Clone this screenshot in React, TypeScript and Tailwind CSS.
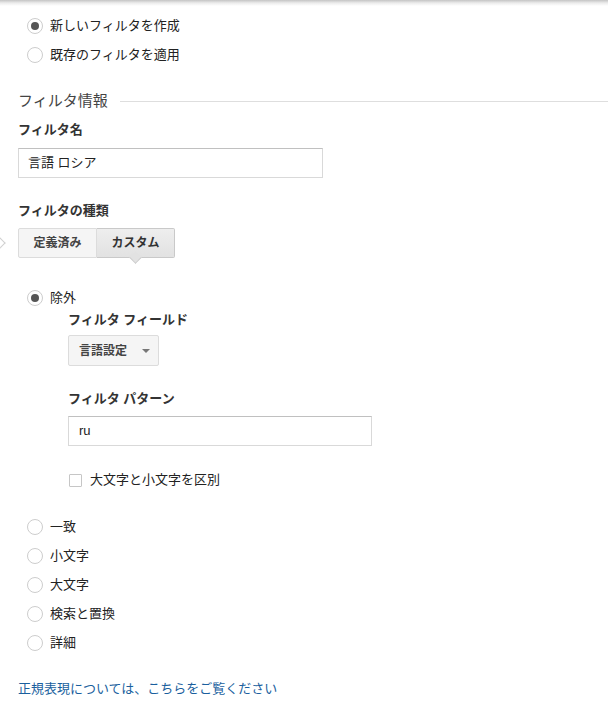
import React from 'react';

const font = "font-['Liberation_Sans','Noto_Sans_CJK_JP',sans-serif]";

function Radio({ label, checked = false, className = 'h-[29px]' }: { label: string; checked?: boolean; className?: string }) {
  return (
    <div className={`flex items-center pl-[27px] ${className}`}>
      <span className="flex h-[16px] w-[16px] items-center justify-center rounded-full border border-[#cdcdcd] bg-white">
        {checked && <span className="h-[8px] w-[8px] rounded-full bg-[#555]" />}
      </span>
      <span className="ml-[7px] text-[13px] leading-[18px] text-[#222]">{label}</span>
    </div>
  );
}

function Label({ children, className = '' }: { children: React.ReactNode; className?: string }) {
  return <div className={`text-[13px] font-bold leading-[18px] text-[#333] ${className}`}>{children}</div>;
}

export default function App() {
  return (
    <div className={`relative w-[608px] min-h-[717px] bg-white ${font}`}>
      {/* top shadow */}
      <div className="h-[6px] bg-gradient-to-b from-[#c4c4c4] via-[#ececec] to-white" />

      <div className="pt-[5px]">
        <Radio label="新しいフィルタを作成" checked />
        <Radio label="既存のフィルタを適用" />
      </div>

      <div className="mt-[22px] flex items-center pl-[18px]">
        <span className="text-[15px] leading-[20px] text-[#444]">フィルタ情報</span>
        <span className="ml-[12px] h-px flex-1 bg-[#dedede]" />
      </div>

      <div className="pl-[18px]">
        <Label className="mt-[10px]">フィルタ名</Label>
        <div className="mt-[9px] flex h-[30px] w-[305px] items-center border border-[#d9d9d9] border-t-[#c0c0c0] px-[9px] text-[13px] text-[#222]">
          言語 ロシア
        </div>

        <Label className="mt-[24px]">フィルタの種類</Label>
        <div className="relative mt-[8px] flex h-[30px]">
          <span className="absolute left-[-22px] top-[11px] h-[8px] w-[8px] rotate-45 border-r border-t border-[#d0d0d0]" />
          <div className="flex w-[79px] items-center justify-center rounded-l-[2px] border border-[#dcdcdc] bg-[#f5f5f5] text-[12px] font-bold text-[#444]">
            定義済み
          </div>
          <div className="relative flex w-[78px] items-center justify-center rounded-r-[2px] border border-l-0 border-[#c9c9c9] bg-gradient-to-b from-[#eeeeee] to-[#e2e2e2] text-[12px] font-bold text-[#333]">
            カスタム
            <span className="absolute bottom-[-5px] left-[34px] h-[9px] w-[9px] rotate-45 border-b border-r border-[#cfcfcf] bg-[#e2e2e2]" />
          </div>
        </div>
      </div>

      <Radio label="除外" checked className="mt-[26px] h-[27px]" />

      <div className="pl-[68px]">
        <Label>フィルタ フィールド</Label>
        <div className="mt-[6px] flex h-[31px] w-[91px] items-center rounded-[2px] border border-[#dcdcdc] bg-[#f5f5f5] pl-[10px] text-[12px] font-bold text-[#444]">
          言語設定
          <span className="ml-[15px] h-0 w-0 border-x-[4px] border-t-[4px] border-x-transparent border-t-[#777]" />
        </div>

        <Label className="mt-[24px]">フィルタ パターン</Label>
        <div className="mt-[8px] flex h-[30px] w-[304px] items-center border border-[#d9d9d9] border-t-[#c0c0c0] px-[10px] text-[13px] text-[#222]">
          ru
        </div>

        <div className="mt-[24px] flex h-[20px] items-center">
          <span className="ml-[1px] h-[13px] w-[13px] rounded-[1px] border border-[#c6c6c6] bg-white" />
          <span className="ml-[8px] text-[13px] leading-[18px] text-[#222]">大文字と小文字を区別</span>
        </div>
      </div>

      <div className="mt-[22px]">
        <Radio label="一致" />
        <Radio label="小文字" />
        <Radio label="大文字" />
        <Radio label="検索と置換" />
        <Radio label="詳細" />
      </div>

      <div className="mt-[23px] pl-[18px] text-[13px] leading-[18px] text-[#1a5f9e]">
        正規表現については、こちらをご覧ください
      </div>
    </div>
  );
}
